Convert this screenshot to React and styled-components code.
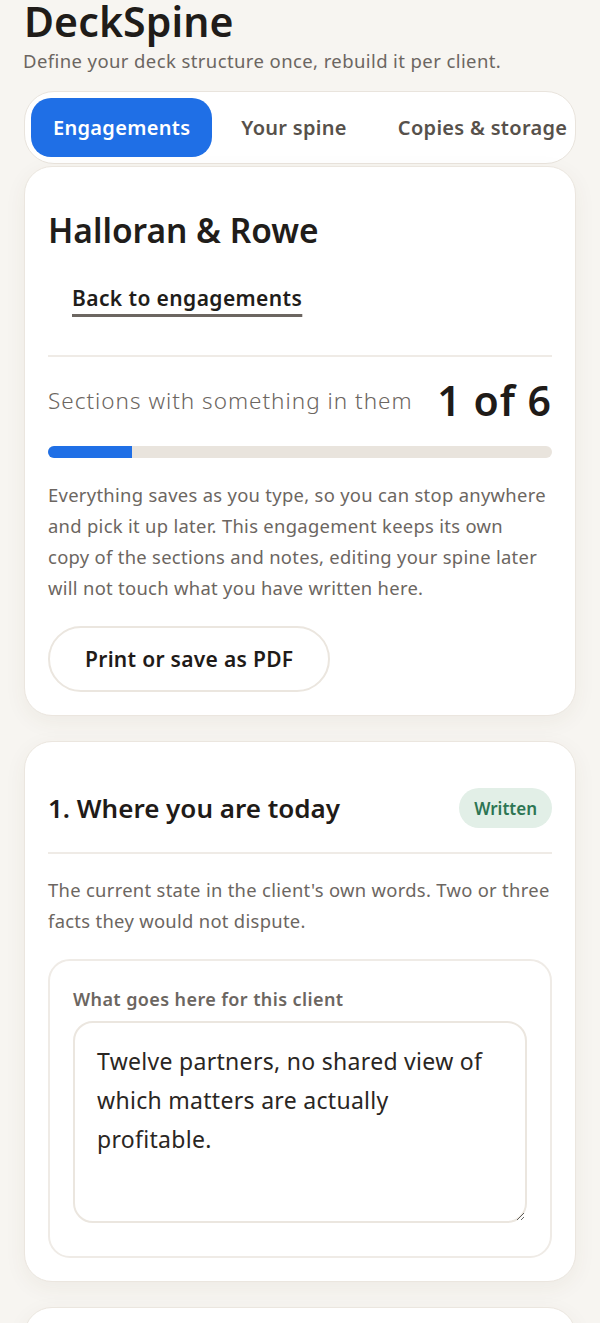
import React from "react";
import styled, { createGlobalStyle } from "styled-components";

const GlobalStyle = createGlobalStyle`
  html, body {
    margin: 0;
    padding: 0;
    background: #f7f5f1;
  }
  body {
    font-family: "Noto Sans", Lato, "Liberation Sans", sans-serif;
    color: #211d1a;
  }
  * {
    box-sizing: border-box;
  }
`;

const Page = styled.div`
  padding: 0 24px 40px;
  overflow: hidden;
`;

const Brand = styled.h1`
  margin: 0;
  font-size: 41px;
  font-weight: 600;
  line-height: 42px;
  letter-spacing: 0.1px;
  color: #201c19;
`;

const Tagline = styled.p`
  margin: 7px 0 18px -1px;
  font-size: 18.5px;
  line-height: 24px;
  letter-spacing: 0.4px;
  color: #6c6661;
`;

const Tabs = styled.nav`
  display: flex;
  gap: 7px;
  padding: 6px;
  background: #fff;
  border: 1px solid #e9e4dd;
  border-radius: 30px;
  overflow: hidden;
  white-space: nowrap;
`;

const Tab = styled.button`
  flex: none;
  height: 59px;
  padding: 0 22px;
  border: 0;
  border-radius: 20px;
  font-family: inherit;
  font-size: 20px;
  font-weight: 600;
  letter-spacing: 0.3px;
  background: ${(p) => (p.$active ? "#1f6fe6" : "transparent")};
  color: ${(p) => (p.$active ? "#fff" : "#57514b")};
`;

const Card = styled.section`
  margin-top: ${(p) => p.$gap || 2}px;
  padding: 24px 23px 23px;
  background: #fff;
  border: 1px solid #ebe6df;
  border-radius: 28px;
  box-shadow: 0 6px 22px rgba(80, 60, 40, 0.06);
`;

const ClientName = styled.h2`
  margin: 19px 0 0;
  font-size: 33.5px;
  font-weight: 600;
  line-height: 40px;
`;

const BackLink = styled.a`
  display: inline-block;
  margin: 34px 0 0 24px;
  font-size: 21px;
  font-weight: 600;
  line-height: 28px;
  letter-spacing: 0.4px;
  color: #211d1a;
  text-decoration: underline;
  text-decoration-color: #6c6661;
  text-decoration-thickness: 3px;
  text-underline-offset: 8px;
`;

const Divider = styled.hr`
  margin: ${(p) => p.$top || 0}px 0 0;
  border: 0;
  border-top: 2px solid #efebe6;
`;

const ProgressHead = styled.div`
  display: flex;
  align-items: center;
  justify-content: space-between;
  margin-top: 19px;
  height: 48px;
`;

const ProgressLabel = styled.span`
  font-size: 22.5px;
  font-weight: 300;
  letter-spacing: 1px;
  color: #6c6661;
`;

const ProgressCount = styled.span`
  font-size: 41px;
  font-weight: 600;
  letter-spacing: 1px;
  color: #1f1b18;
`;

const Bar = styled.div`
  height: 12px;
  margin-top: 22px;
  border-radius: 6px;
  background: #e9e4dd;
  overflow: hidden;
`;

const BarFill = styled.div`
  height: 100%;
  background: #1f6fe6;
`;

const Note = styled.p`
  margin: ${(p) => p.$top || 0}px 0 0;
  font-size: 18.4px;
  line-height: 31px;
  letter-spacing: 0.3px;
  color: #6c6661;
`;

const NoteLine = styled.span`
  display: block;
  white-space: nowrap;
`;

const PillButton = styled.button`
  display: block;
  height: 66px;
  margin-top: 23px;
  padding: 0 35px;
  border: 2px solid #ebe6df;
  border-radius: 34px;
  background: #fff;
  font-family: inherit;
  font-size: 21px;
  font-weight: 600;
  letter-spacing: 0.3px;
  color: #1f1b18;
`;

const SectionHead = styled.div`
  display: flex;
  align-items: center;
  justify-content: space-between;
  margin-top: 22px;
`;

const SectionTitle = styled.h3`
  margin: 0;
  font-size: 26px;
  font-weight: 600;
  color: #1f1b18;
`;

const Badge = styled.span`
  display: flex;
  align-items: center;
  height: 40px;
  padding: 0 15px;
  border-radius: 20px;
  background: #e2efe7;
  color: #2d7553;
  font-size: 17px;
  font-weight: 600;
`;

const Field = styled.div`
  margin-top: 23px;
  padding: 26px 23px 33px;
  border: 2px solid #efebe6;
  border-radius: 22px;
`;

const FieldLabel = styled.label`
  display: block;
  font-size: 18px;
  font-weight: 600;
  line-height: 24px;
  letter-spacing: 0.4px;
  color: #6c6661;
`;

const Answer = styled.textarea`
  display: block;
  width: 100%;
  height: 202px;
  margin-top: 10px;
  padding: 19px 24px 19px 22px;
  border: 2px solid #ebe6df;
  border-radius: 20px;
  font-family: inherit;
  font-size: 23px;
  line-height: 39px;
  letter-spacing: 0.3px;
  color: #2a2623;
  resize: vertical;
  outline: none;
`;

const tabs = ["Engagements", "Your spine", "Copies & storage"];

const savingNote = [
  "Everything saves as you type, so you can stop anywhere",
  "and pick it up later. This engagement keeps its own",
  "copy of the sections and notes, editing your spine later",
  "will not touch what you have written here.",
];

const App = () => {
  const done = 1;
  const total = 6;
  return (
    <>
      <GlobalStyle />
      <Page>
        <Brand>DeckSpine</Brand>
        <Tagline>Define your deck structure once, rebuild it per client.</Tagline>
        <Tabs>
          {tabs.map((t, i) => (
            <Tab key={t} $active={i === 0}>
              {t}
            </Tab>
          ))}
        </Tabs>

        <Card>
          <ClientName>Halloran &amp; Rowe</ClientName>
          <BackLink href="#">Back to engagements</BackLink>
          <Divider $top={43} />
          <ProgressHead>
            <ProgressLabel>Sections with something in them</ProgressLabel>
            <ProgressCount>
              {done} of {total}
            </ProgressCount>
          </ProgressHead>
          <Bar>
            <BarFill style={{ width: `${(done / total) * 100}%` }} />
          </Bar>
          <Note $top={21}>
            {savingNote.map((line) => (
              <NoteLine key={line}>{line}</NoteLine>
            ))}
          </Note>
          <PillButton>Print or save as PDF</PillButton>
        </Card>

        <Card $gap={25}>
          <SectionHead>
            <SectionTitle>1. Where you are today</SectionTitle>
            <Badge>Written</Badge>
          </SectionHead>
          <Divider $top={24} />
          <Note $top={20}>
            The current state in the client's own words. Two or three facts
            they would not dispute.
          </Note>
          <Field>
            <FieldLabel>What goes here for this client</FieldLabel>
            <Answer defaultValue="Twelve partners, no shared view of which matters are actually profitable." />
          </Field>
        </Card>

        <Card $gap={25} style={{ height: 120 }} />
      </Page>
    </>
  );
};

export default App;
